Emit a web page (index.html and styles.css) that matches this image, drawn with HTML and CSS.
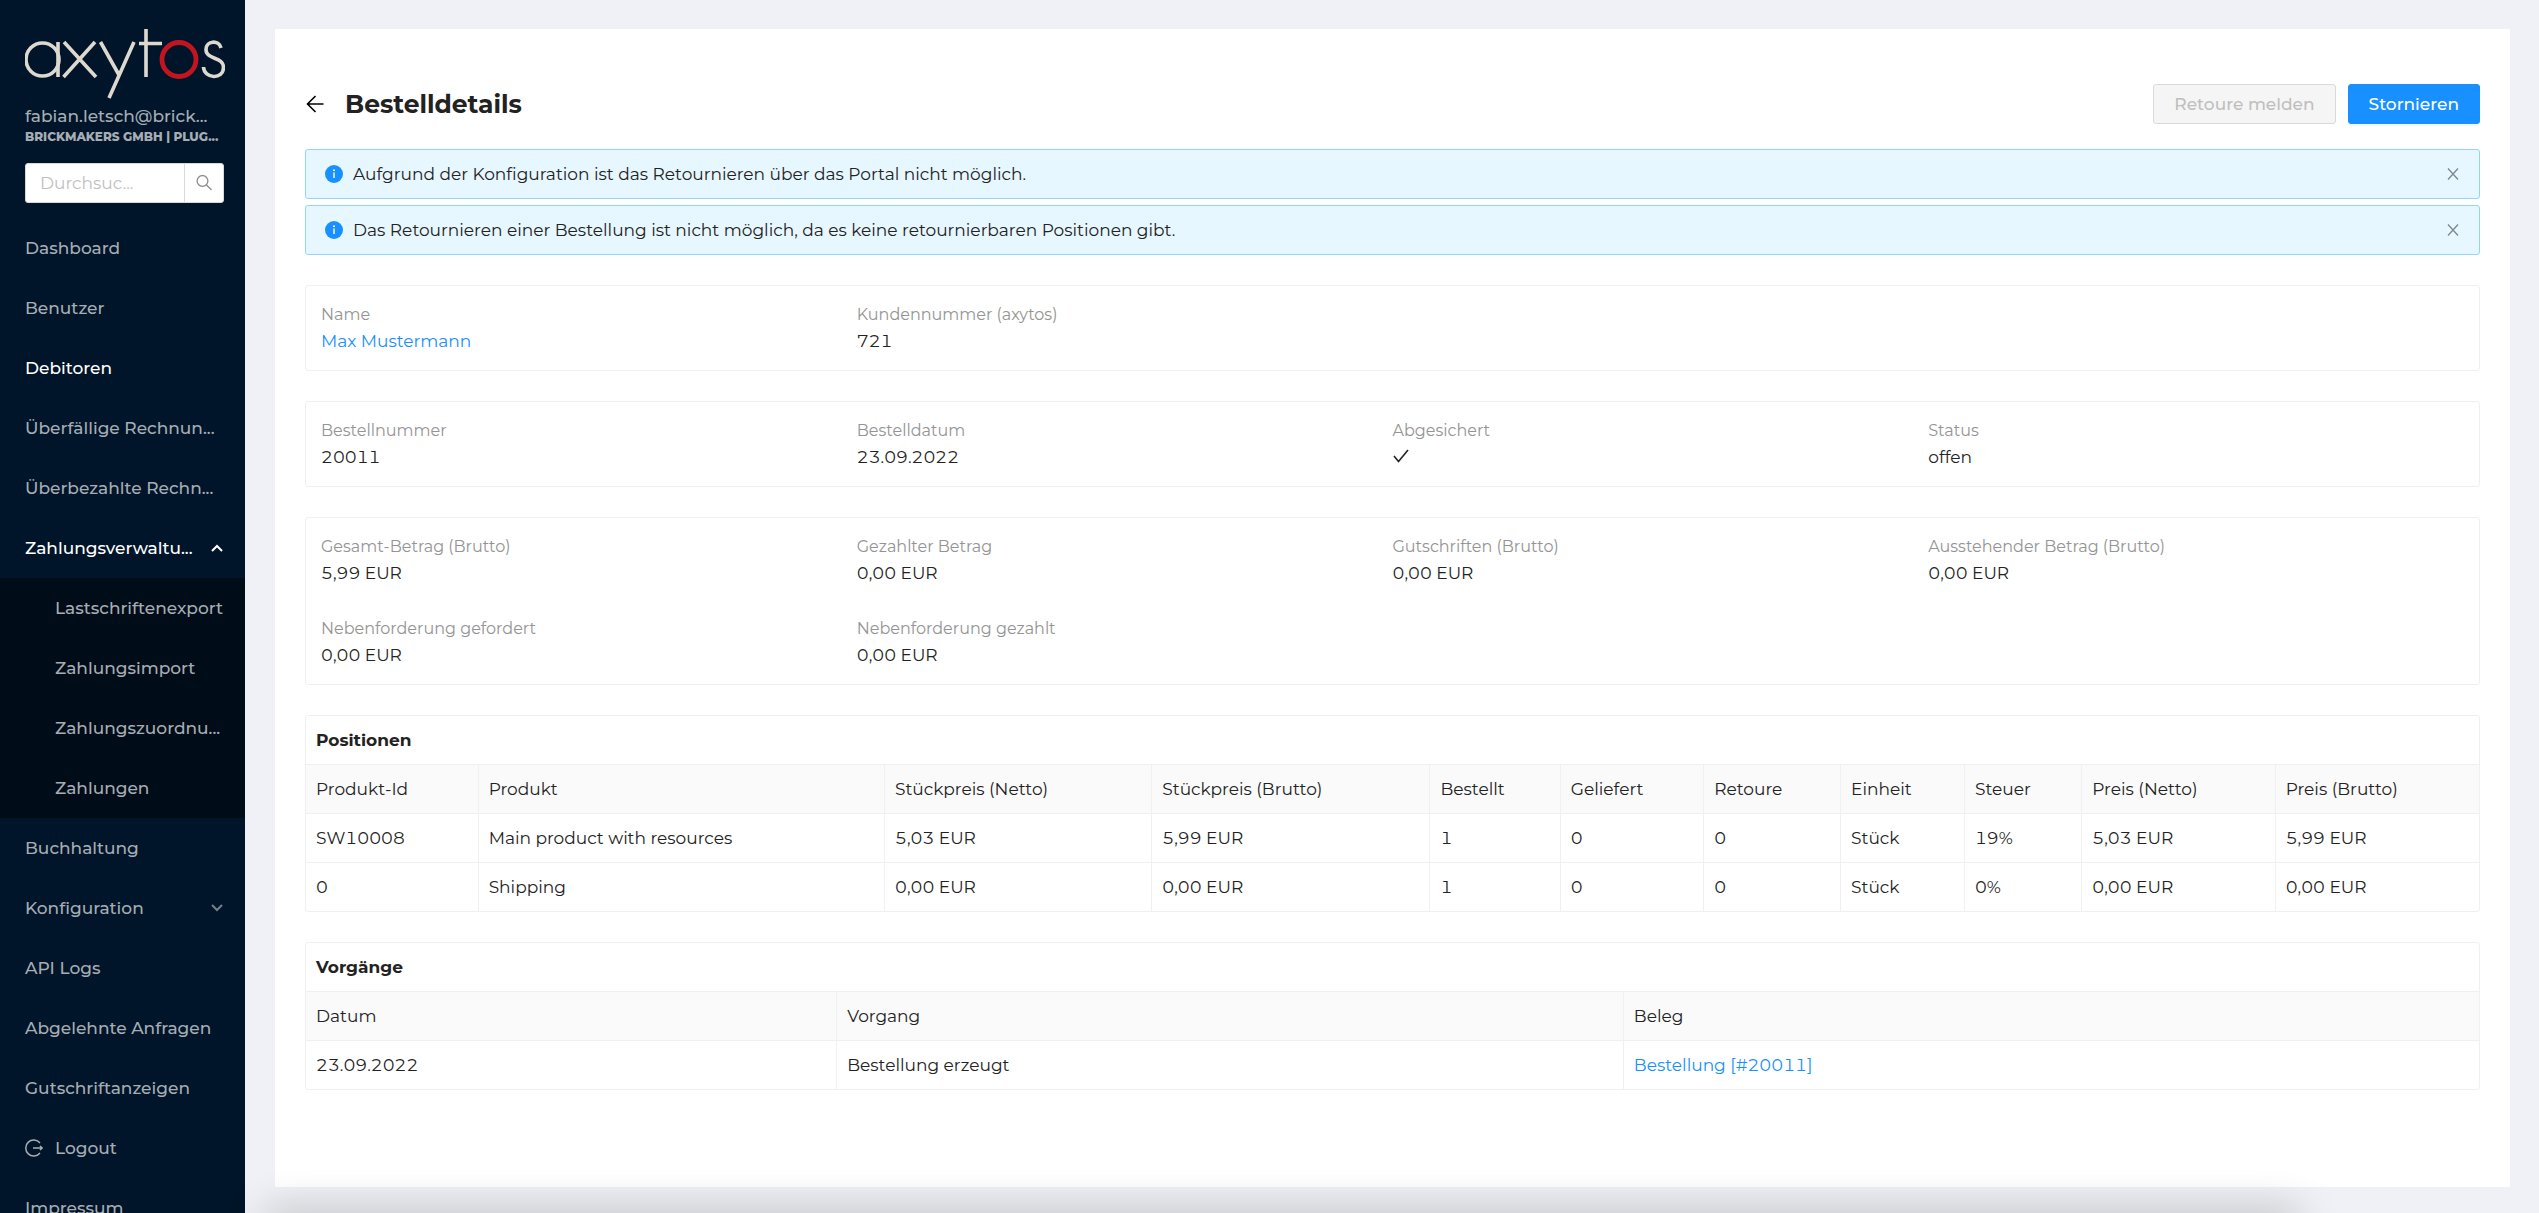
FILE: index.html
```html
<!DOCTYPE html>
<html lang="de">
<head>
<meta charset="utf-8">
<title>Bestelldetails</title>
<meta name="viewport" content="width=device-width, initial-scale=1">
<link rel="stylesheet" href="styles.css">
</head>
<body>
<div class="layout">
  <aside class="sidebar">
    <a class="logo" href="#" aria-label="axytos">
      <svg viewBox="0 0 200 70" width="200" height="70" fill="none" stroke="#ded9d0" stroke-width="3.6">
        <circle cx="17.500" cy="30.500" r="16.500"/>
        <path d="M33 13V48M39 13L71 48M70 13L38.500 48M75.500 13L94 46M109 13L84 69M121 0V48M114 14.500H137"/>
        <circle cx="154" cy="30.500" r="17" stroke="#c2151f" stroke-width="4.800"/>
        <path d="M196 19C194 10.500 181 11.500 181 20.500C181 31 198.500 27.500 198.500 38.500C198.500 51 179 50 178.500 38"/>
      </svg>
    </a>
    <div class="account">
      <div class="account-mail">fabian.letsch@brick...</div>
      <div class="account-org">BRICKMAKERS GMBH | PLUG...</div>
    </div>
    <form class="search">
      <input class="search-input" type="search" placeholder="Durchsuc..." aria-label="Durchsuchen">
      <button class="search-button" type="button" aria-label="Suchen">
        <svg viewBox="0 0 16 16" width="16" height="16" fill="none" stroke="currentColor" stroke-width="1.300"><circle cx="6.500" cy="6" r="5.400"/><path d="M10.300 9.800L15.500 15"/></svg>
      </button>
    </form>
    <nav class="menu">
      <a class="menu-item" href="#"><span class="menu-text">Dashboard</span></a>
      <a class="menu-item" href="#"><span class="menu-text">Benutzer</span></a>
      <a class="menu-item active" href="#"><span class="menu-text">Debitoren</span></a>
      <a class="menu-item" href="#"><span class="menu-text">Überfällige Rechnun...</span></a>
      <a class="menu-item" href="#"><span class="menu-text">Überbezahlte Rechn...</span></a>
      <a class="menu-item active" href="#"><span class="menu-text">Zahlungsverwaltu...</span><svg class="chevron" viewBox="0 0 12 8" width="12" height="8" fill="none" stroke="currentColor" stroke-width="2"><path d="M1 7L6 2L11 7"/></svg></a>
      <div class="submenu">
        <a class="menu-item" href="#"><span class="menu-text">Lastschriftenexport</span></a>
        <a class="menu-item" href="#"><span class="menu-text">Zahlungsimport</span></a>
        <a class="menu-item" href="#"><span class="menu-text">Zahlungszuordnu...</span></a>
        <a class="menu-item" href="#"><span class="menu-text">Zahlungen</span></a>
      </div>
      <a class="menu-item" href="#"><span class="menu-text">Buchhaltung</span></a>
      <a class="menu-item" href="#"><span class="menu-text">Konfiguration</span><svg class="chevron muted" viewBox="0 0 12 8" width="12" height="8" fill="none" stroke="currentColor" stroke-width="2"><path d="M1 1L6 6L11 1"/></svg></a>
      <a class="menu-item" href="#"><span class="menu-text">API Logs</span></a>
      <a class="menu-item" href="#"><span class="menu-text">Abgelehnte Anfragen</span></a>
      <a class="menu-item" href="#"><span class="menu-text">Gutschriftanzeigen</span></a>
      <a class="menu-item" href="#"><svg viewBox="0 0 18 18" width="18" height="18" fill="none" stroke="currentColor" stroke-width="1.500"><path d="M15 4A8 8 0 1 0 15 14M8 9H17M15 7L17.200 9L15 11"/></svg><span class="menu-text">Logout</span></a>
      <a class="menu-item" href="#"><span class="menu-text">Impressum</span></a>
    </nav>
  </aside>

  <main class="content">
    <div class="page">
      <header class="page-header">
        <button class="back" type="button" aria-label="Zurück">
          <svg viewBox="0 0 18 18" width="18" height="18" fill="none" stroke="currentColor" stroke-width="1.600"><path d="M17.500 9H1.500M9.500 1L1.500 9L9.500 17"/></svg>
        </button>
        <h1 class="page-title">Bestelldetails</h1>
        <div class="actions">
          <button class="btn" type="button" disabled>Retoure melden</button>
          <button class="btn btn-primary" type="button">Stornieren</button>
        </div>
      </header>

      <div class="alerts">
        <div class="alert" role="status">
          <svg viewBox="0 0 18 18" width="18" height="18"><circle cx="9" cy="9" r="9" fill="#1890ff"/><path d="M9 7.500V13" stroke="#fff" stroke-width="1.400"/><circle cx="9" cy="5.300" r="1" fill="#fff"/></svg>
          <span class="alert-text">Aufgrund der Konfiguration ist das Retournieren über das Portal nicht möglich.</span>
          <button class="alert-close" type="button" aria-label="Schließen"><svg viewBox="0 0 12 12" width="12" height="12" fill="none" stroke="currentColor" stroke-width="1.300"><path d="M1 0.500L11 11.500M11 0.500L1 11.500"/></svg></button>
        </div>
        <div class="alert" role="status">
          <svg viewBox="0 0 18 18" width="18" height="18"><circle cx="9" cy="9" r="9" fill="#1890ff"/><path d="M9 7.500V13" stroke="#fff" stroke-width="1.400"/><circle cx="9" cy="5.300" r="1" fill="#fff"/></svg>
          <span class="alert-text">Das Retournieren einer Bestellung ist nicht möglich, da es keine retournierbaren Positionen gibt.</span>
          <button class="alert-close" type="button" aria-label="Schließen"><svg viewBox="0 0 12 12" width="12" height="12" fill="none" stroke="currentColor" stroke-width="1.300"><path d="M1 0.500L11 11.500M11 0.500L1 11.500"/></svg></button>
        </div>
      </div>

      <dl class="details">
        <div><dt>Name</dt><dd><a class="link" href="#">Max Mustermann</a></dd></div>
        <div><dt>Kundennummer (axytos)</dt><dd>721</dd></div>
      </dl>

      <dl class="details">
        <div><dt>Bestellnummer</dt><dd>20011</dd></div>
        <div><dt>Bestelldatum</dt><dd>23.09.2022</dd></div>
        <div><dt>Abgesichert</dt><dd><svg class="check" role="img" aria-label="Ja" viewBox="0 0 16 14" width="16" height="14" fill="none" stroke="currentColor" stroke-width="1.600"><path d="M1 7L5.500 12.500L15 1"/></svg></dd></div>
        <div><dt>Status</dt><dd>offen</dd></div>
      </dl>

      <dl class="details">
        <div><dt>Gesamt-Betrag (Brutto)</dt><dd>5,99 EUR</dd></div>
        <div><dt>Gezahlter Betrag</dt><dd>0,00 EUR</dd></div>
        <div><dt>Gutschriften (Brutto)</dt><dd>0,00 EUR</dd></div>
        <div><dt>Ausstehender Betrag (Brutto)</dt><dd>0,00 EUR</dd></div>
        <div><dt>Nebenforderung gefordert</dt><dd>0,00 EUR</dd></div>
        <div><dt>Nebenforderung gezahlt</dt><dd>0,00 EUR</dd></div>
      </dl>

      <section class="panel">
        <h2 class="panel-title" id="positionen">Positionen</h2>
        <table class="table" aria-labelledby="positionen">
          <colgroup><col class="p-id"><col class="p-product"><col class="p-unit-net"><col class="p-unit-gross"><col class="p-ordered"><col class="p-delivered"><col class="p-returned"><col class="p-unit"><col class="p-tax"><col class="p-net"><col class="p-gross"></colgroup>
          <thead><tr><th>Produkt-Id</th><th>Produkt</th><th>Stückpreis (Netto)</th><th>Stückpreis (Brutto)</th><th>Bestellt</th><th>Geliefert</th><th>Retoure</th><th>Einheit</th><th>Steuer</th><th>Preis (Netto)</th><th>Preis (Brutto)</th></tr></thead>
          <tbody>
            <tr><td>SW10008</td><td>Main product with resources</td><td>5,03 EUR</td><td>5,99 EUR</td><td>1</td><td>0</td><td>0</td><td>Stück</td><td>19%</td><td>5,03 EUR</td><td>5,99 EUR</td></tr>
            <tr><td>0</td><td>Shipping</td><td>0,00 EUR</td><td>0,00 EUR</td><td>1</td><td>0</td><td>0</td><td>Stück</td><td>0%</td><td>0,00 EUR</td><td>0,00 EUR</td></tr>
          </tbody>
        </table>
      </section>

      <section class="panel">
        <h2 class="panel-title" id="vorgaenge">Vorgänge</h2>
        <table class="table" aria-labelledby="vorgaenge">
          <colgroup><col class="v-date"><col class="v-event"><col class="v-doc"></colgroup>
          <thead><tr><th>Datum</th><th>Vorgang</th><th>Beleg</th></tr></thead>
          <tbody><tr><td>23.09.2022</td><td>Bestellung erzeugt</td><td><a class="link" href="#">Bestellung [#20011]</a></td></tr></tbody>
        </table>
      </section>
    </div>
    <div class="bottom-shade"></div>
  </main>
</div>
</body>
</html>
```

FILE: styles.css
```css
* { box-sizing: border-box; }

body {
  margin: 0;
  background: #f0f1f6;
  color: #222;
  font-family: Montserrat, Inter, sans-serif;
  font-size: 17px;
  line-height: 26px;
  font-variant-numeric: tabular-nums;
}

button, input { font: inherit; }
h1, h2, dl, dd { margin: 0; }

.link { color: #1890ff; text-decoration: none; }

.layout {
  display: flex;
  height: 100vh;
  overflow: hidden;
}

/* Sidebar */
.sidebar {
  flex: 0 0 245px;
  padding-top: 29px;
  overflow: hidden;
  background: #001529;
  color: #a6adb4;
  font-weight: 500;
}

.logo { display: block; height: 74px; padding-left: 25px; }
.logo svg { display: block; }

.account { padding: 0 10px 0 25px; white-space: nowrap; }
.account-org {
  font-size: 12px;
  font-weight: 800;
  line-height: 16px;
}

.search {
  display: flex;
  height: 40px;
  margin: 18px 21px 15px 25px;
  border: 1px solid #d9d9d9;
  border-radius: 3px;
  background: #fff;
  font-weight: 400;
}
.search-input {
  flex: 1;
  min-width: 0;
  padding: 0 14px;
  border: 0;
  background: none;
}
.search-input::placeholder { color: #bfbfbf; }
.search-button {
  display: grid;
  place-items: center;
  width: 39px;
  padding: 0;
  border: 0;
  border-left: 1px solid #d9d9d9;
  background: none;
  color: #8c8c8c;
}

.menu-item {
  display: flex;
  align-items: center;
  gap: 12px;
  height: 60px;
  padding: 0 22px 0 25px;
  color: inherit;
  text-decoration: none;
  white-space: nowrap;
}
.active { color: #fff; }
.chevron { flex: none; margin-left: auto; }
.muted { opacity: 0.7; }
.submenu { background: #000c17; }
.submenu .menu-item { padding-right: 10px; padding-left: 55px; }

/* Page */
.content {
  position: relative;
  display: flex;
  flex: 1;
  min-width: 0;
  padding: 29px 29px 26px 30px;
}
.page {
  display: flex;
  flex: 1;
  flex-direction: column;
  gap: 30px;
  min-width: 0;
  padding: 55px 30px;
  background: #fff;
}
.page-header {
  display: flex;
  align-items: center;
  height: 40px;
  margin-bottom: -5px;
}
.back {
  display: grid;
  padding: 0 0 0 1px;
  border: 0;
  background: none;
  color: #000;
}
.page-title {
  margin-left: 21px;
  font-size: 25px;
  font-weight: 700;
  line-height: 40px;
}
.actions { display: flex; gap: 12px; margin-left: auto; }
.btn {
  height: 40px;
  padding: 0 20px;
  border: 1px solid #d9d9d9;
  border-radius: 3px;
  background: #f5f5f5;
  color: #bfbfbf;
  font-weight: 500;
}
.btn-primary {
  border-color: #1890ff;
  background: #1890ff;
  box-shadow: 0 2px 0 rgba(0, 0, 0, 0.04);
  color: #fff;
}

.alerts { display: grid; gap: 6px; }
.alert {
  display: flex;
  align-items: center;
  gap: 10px;
  height: 50px;
  padding: 0 20px 0 19px;
  border: 1px solid #91d5ff;
  border-radius: 3px;
  background: #e6f7ff;
}
.alert-close {
  display: grid;
  margin-left: auto;
  padding: 0;
  border: 0;
  background: none;
  color: #7f888c;
}

.details {
  display: grid;
  grid-template-columns: repeat(4, 1fr);
  gap: 30px 0;
  padding: 16px 15px;
  border: 1px solid #f0f0f0;
  border-radius: 3px;
}
.details dt { color: #949494; font-size: 16px; }
.check { display: inline-block; }

.panel {
  border: 1px solid #f0f0f0;
  border-radius: 3px;
}
.panel-title {
  padding: 11px 10px;
  font-size: 17px;
  font-weight: 700;
  line-height: 26px;
}
.table {
  width: 100%;
  table-layout: fixed;
  border-collapse: separate;
  border-spacing: 0;
}
.table th, .table td {
  height: 49px;
  padding: 0 10px;
  border-top: 1px solid #f0f0f0;
  font-weight: 400;
  text-align: left;
}
.table th + th, .table td + td { border-left: 1px solid #f0f0f0; }
.table th { background: #fafafa; }

.p-id { width: 7.9%; }
.p-product { width: 18.7%; }
.p-unit-net { width: 12.3%; }
.p-unit-gross { width: 12.8%; }
.p-ordered { width: 6%; }
.p-delivered { width: 6.6%; }
.p-returned { width: 6.3%; }
.p-unit { width: 5.7%; }
.p-tax { width: 5.4%; }
.p-net { width: 8.9%; }
.p-gross { width: 9.4%; }
.v-date { width: 24.4%; }
.v-event { width: 36.2%; }
.v-doc { width: 39.4%; }

/* Soft shade along the bottom edge */
.bottom-shade {
  position: absolute;
  top: 100%;
  right: 240px;
  left: 20px;
  height: 20px;
  box-shadow: 0 0 40px rgba(0, 0, 0, 0.3);
}
```
